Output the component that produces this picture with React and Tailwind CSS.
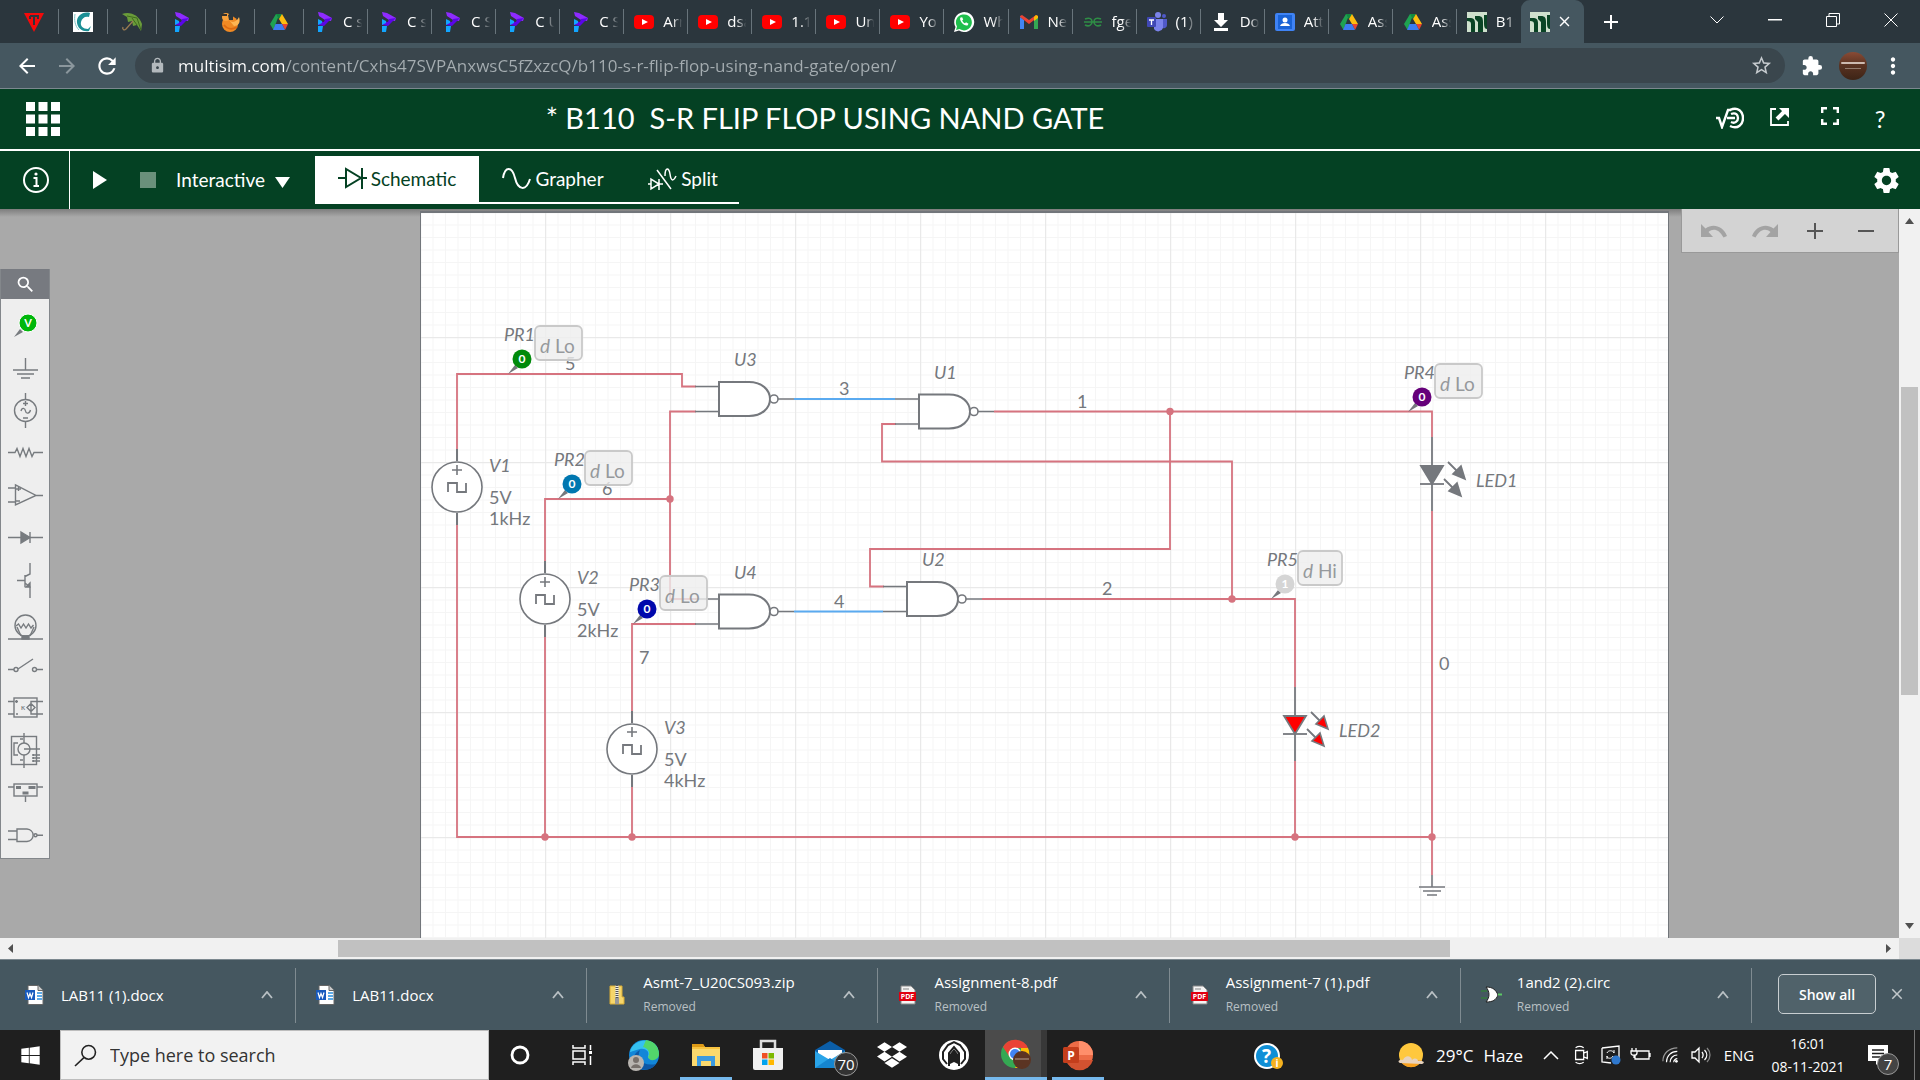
import React from "react";
import {
  MdArrowBack, MdArrowForward, MdRefresh, MdLock, MdStarBorder, MdExtension, MdMoreVert,
  MdSettings, MdSearch, MdClose, MdAdd,
} from "react-icons/md";
import { FaDropbox, FaWindows } from "react-icons/fa";

/* ---------- favicons ---------- */

const Svg = ({ s = 20, vb = "0 0 20 20", children, ...p }) => (
  <svg width={s} height={s} viewBox={vb} fill="none" className="shrink-0 overflow-visible" aria-hidden="true" {...p}>
    {children}
  </svg>
);

const TIcon = () => (
  <Svg>
    <path d="M0 1h20L10 20z" fill="#f40a0a" />
    <path d="M6 4h8v3M6 4v3M10 4v9" stroke="#2b363d" strokeWidth="2" />
  </Svg>
);
const CIcon = () => (
  <Svg>
    <rect width="20" height="20" fill="#fff" />
    <path d="M17 1C10-1 3 4 4 11c1 6 6 9 12 8l2-5-3 3c-5 0-8-3-7-7s4-6 8-5z" fill="#1b8f95" />
    <path d="M2 2c-1 6 0 12 4 16" stroke="#7fc4c6" />
  </Svg>
);
const Umbrella = () => (
  <Svg>
    <path d="M0 2C8-1 17 3 20 12l-1 7-4-6-4 1-1-5-4 1-1-5z" fill="#6a9c3a" />
    <path d="M10 6l5 7M5 4l10 2 4 12" stroke="#3f6b1e" />
    <path d="M11 9L4 17c-2 2-4 0-3-2" stroke="#9a7b52" strokeWidth="1.3" />
  </Svg>
);
const PIcon = () => (
  <Svg>
    <path d="M4 0l5 1 9 5-1 3-6-1-6-4z" fill="#8e2bff" />
    <path d="M18 6l-8 8-6-1 1-4 5 1 1-3z" fill="#5b05e8" />
    <path d="M4 7l4 2v2l-4 2zM4 14h5l-1 6H4z" fill="#12a5ff" />
  </Svg>
);
const Bird = () => (
  <Svg>
    <circle cx="10" cy="12" r="8" fill="#f08a24" />
    <circle cx="6" cy="5" r="4" fill="#f7a13c" />
    <path d="M8 3l5-3v8H9z" fill="#2b363d" />
    <path d="M9 8c4 4 8 1 10-3 2 6-1 9-5 9z" fill="#ffb552" />
    <path d="M1 2h6v2H1z" fill="#33302c" />
    <path d="M4 13c3 4 8 5 13 2" stroke="#dd6a12" strokeWidth="2" />
  </Svg>
);
const Drive = () => (
  <Svg>
    <path d="M7 2h3.300L4.500 18 1 12z" fill="#1fa251" />
    <path d="M7 2h6L10 7.500z" fill="#138a3f" />
    <path d="M13 2l6 10h-6L10 7z" fill="#fdbd0e" />
    <path d="M13 12h6l-3 6z" fill="#e8432f" />
    <path d="M6.500 12H13l3 6H4z" fill="#3d7df0" />
  </Svg>
);
const YouTube = () => (
  <Svg>
    <rect y="3" width="20" height="14" rx="4" fill="#f00" />
    <path d="M8 7l6 3-6 3z" fill="#fff" />
  </Svg>
);
const WhatsApp = () => (
  <Svg>
    <path d="M0 20l1.500-5A10 10 0 1 1 5 18.600z" fill="#fff" />
    <path d="M2 18l1-3.500a8 8 0 1 1 2.500 2.600z" fill="#1fbf4c" />
    <path d="M6.500 5.500c-2 2.500 3.500 9 7 8l1-1.800-2.500-1.500-1 1c-1-.3-2.500-1.800-2.800-2.800l1-1-1-2.200z" fill="#fff" />
  </Svg>
);
const Gmail = () => (
  <Svg>
    <path d="M1 17V5l4 3v9z" fill="#4285f4" />
    <path d="M15 17V8l4-3v12z" fill="#34a853" />
    <path d="M1 5V4l2-1 7 5 7-5 2 1v1l-9 7z" fill="#ea4335" />
    <path d="M15 5l2-2 2 1v2l-4 3z" fill="#fbbc04" />
  </Svg>
);
const Gfg = () => (
  <Svg>
    <path d="M1 10h18M2 7c5-2 7 0 7 3s-3 5-7 3M18 7c-5-2-7 0-7 3s3 5 7 3" stroke="#2f8d46" strokeWidth="1.600" />
  </Svg>
);
const Teams = () => (
  <Svg>
    <circle cx="11" cy="3" r="3" fill="#7b83eb" />
    <circle cx="17" cy="4" r="2" fill="#5059c9" />
    <path d="M7 7h9v9a5 5 0 0 1-9 1z" fill="#7b83eb" />
    <path d="M16 7h4v6a3 3 0 0 1-4 3z" fill="#5059c9" />
    <rect y="5" width="9" height="10" rx="1" fill="#4048b5" />
    <path d="M2 8h5M4.500 8v5" stroke="#fff" strokeWidth="1.300" />
  </Svg>
);
const Classroom = () => (
  <Svg>
    <rect y="1" width="20" height="18" rx="2" fill="#3f83f5" />
    <rect x="3" y="3" width="14" height="14" fill="#1a63d6" />
    <circle cx="10" cy="8" r="2.500" fill="#fff" />
    <path d="M5 14c1-4 9-4 10 0z" fill="#fff" />
  </Svg>
);
const NiIcon = () => (
  <Svg>
    <rect width="20" height="20" fill="#cfe0cd" />
    <path d="M0 6h3c3 0 5 1 5 5v9H4v-8c0-2-1-3-4-3z" fill="#0a4425" />
    <path d="M8 4h3c4 0 5 2 5 6v10h-5V10L8 7z" fill="#0a4425" />
    <path d="M17 3h3v14c-2 0-3-2-3-5z" fill="#0a4425" />
  </Svg>
);
const DownIcon = () => <Svg><path d="M7 1h6v7h4l-7 7-7-7h4zM3 16h14v3H3z" fill="#fff" /></Svg>;

const iconTabs = [TIcon, CIcon, Umbrella, PIcon, Bird, Drive];
const textTabs = [
  [PIcon, "C s"], [PIcon, "C s"], [PIcon, "C S"], [PIcon, "C U"], [PIcon, "C S"],
  [YouTube, "Arr"], [YouTube, "dsa"], [YouTube, "1.1"], [YouTube, "Unt"], [YouTube, "You"],
  [WhatsApp, "Wh"], [Gmail, "New"], [Gfg, "fge"], [Teams, "(1)"], [DownIcon, "Doc"],
  [Classroom, "Att"], [Drive, "Ass"], [Drive, "Ass"], [NiIcon, "B11"],
];

function TabStrip() {
  return (
    <div className="flex h-[43px] shrink-0 bg-[#2b363d] text-[15px] text-white">
      <div className="flex w-[82.5%] items-stretch pl-[10px]" role="tablist">
        {iconTabs.map((Icon, i) => (
          <button key={i} role="tab" aria-label="Pinned tab" className="flex w-[49px] shrink-0 items-center">
            <span className="flex flex-1 justify-center"><Icon /></span>
            <span className="h-[25px] w-px bg-[#68747b]" />
          </button>
        ))}
        {textTabs.map(([Icon, label], i) => (
          <button key={i} role="tab" className="flex min-w-0 flex-1 items-center pl-[10px]">
            <Icon />
            <span className="ml-[9px] flex-1 overflow-hidden whitespace-nowrap text-left [mask-image:linear-gradient(90deg,#000_40%,transparent_80%)]">
              {label}
            </span>
            {i < textTabs.length - 1 && <span className="h-[25px] w-px bg-[#68747b]" />}
          </button>
        ))}
        <button role="tab" aria-selected="true" aria-label="Multisim" className="flex min-w-0 flex-1 items-center gap-[6px] rounded-t-[9px] bg-[#455760] pl-[9px]">
          <NiIcon />
          <MdClose size={17} />
        </button>
      </div>
      <button aria-label="New tab" className="flex w-[54px] items-center justify-center"><MdAdd size={24} /></button>
      <div className="flex-1" />
      <button aria-label="Tab search" className="flex w-[58px] items-center justify-center pb-1">
        <svg width="14" height="8" viewBox="0 0 14 8" fill="none" stroke="#fff"><path d="M.5.5L7 7 13.500.5" /></svg>
      </button>
      <button aria-label="Minimize" className="flex w-[58px] items-center justify-center pb-1">
        <svg width="14" height="2" viewBox="0 0 14 2"><path d="M0 0h14v1.500H0z" fill="#fff" /></svg>
      </button>
      <button aria-label="Restore" className="flex w-[58px] items-center justify-center pb-1">
        <svg width="14" height="14" viewBox="0 0 14 14" fill="none" stroke="#fff"><path d="M.5 3.500h10v10H.5zM3 3V.5h10.500V11H11" /></svg>
      </button>
      <button aria-label="Close" className="flex w-[58px] items-center justify-center pb-1">
        <svg width="14" height="14" viewBox="0 0 14 14" fill="none" stroke="#fff"><path d="M.5.5l13 13M13.500.5l-13 13" /></svg>
      </button>
    </div>
  );
}

function AddressBar() {
  return (
    <div className="flex h-[46px] shrink-0 items-center border-b border-[#7c888f] bg-[#455760] text-white">
      <button aria-label="Back" className="ml-[7px] flex w-[40px] justify-center"><MdArrowBack size={24} /></button>
      <button aria-label="Forward" className="flex w-[40px] justify-center text-[#8b979d]"><MdArrowForward size={24} /></button>
      <button aria-label="Reload" className="flex w-[40px] justify-center"><MdRefresh size={26} /></button>
      <div className="ml-[8px] flex h-[35px] flex-1 items-center rounded-full bg-[#3a464d] pl-[14px] pr-[12px]">
        <MdLock size={17} className="text-[#b3b9bd]" />
        <input
          aria-label="Address"
          defaultValue="multisim.com/content/Cxhs47SVPAnxwsC5fZxzcQ/b110-s-r-flip-flop-using-nand-gate/open/"
          className="ml-[12px] min-w-0 flex-1 bg-[linear-gradient(90deg,#fff_107px,#a5adb1_107px)] bg-clip-text text-[17px] text-transparent outline-none"
        />
        <MdStarBorder size={23} className="text-[#c5cace]" />
      </div>
      <button aria-label="Extensions" className="ml-[15px] flex w-6 justify-center"><MdExtension size={22} /></button>
      <button aria-label="Profile" className="ml-[15px] flex size-[28px] flex-col items-center justify-center gap-1 rounded-full bg-[linear-gradient(#8a4b35,#5a3322_45%,#3d2416)]">
        <span className="h-[2px] w-[24px] rounded bg-[#cdbab0]" />
        <span className="h-px w-[16px] bg-[#937a6c]" />
      </button>
      <button aria-label="Menu" className="ml-[13px] mr-[14px] flex w-[26px] justify-center"><MdMoreVert size={26} /></button>
    </div>
  );
}

/* ---------- Multisim header ---------- */

function AppHeader() {
  return (
    <header className="grid h-[62px] shrink-0 grid-cols-[1fr_auto_1fr] items-center border-b-2 border-white bg-[#044123] text-white">
      <button aria-label="Apps" className="ml-[26px] w-[34px]">
        <svg width="34" height="34" viewBox="0 0 34 34" fill="#fff">
          {[0, 1, 2].map((r) => [0, 1, 2].map((c) => (
            <rect key={`${r}${c}`} x={c * 12.500} y={r * 12.500} width="9" height="9" />
          )))}
        </svg>
      </button>
      <h1 className="whitespace-pre pb-[2px] pr-[270px] text-[29px] leading-[36px]">* B110  S-R FLIP FLOP USING NAND GATE</h1>
      <div className="flex justify-end pr-[15px]">
        <button aria-label="Equations" className="flex w-[50px] justify-center">
          <svg width="28" height="22" viewBox="0 0 28 22" fill="none" stroke="#fff" strokeWidth="2.400">
            <path d="M0 11h3l3 9L12 3h3" />
            <path d="M14 3c8-4 13 2 13 8s-5 12-13 8" />
            <path d="M11 11h8M15 7c5-2 7 1 7 4s-3 6-7 4" />
          </svg>
        </button>
        <button aria-label="Share" className="flex w-[50px] justify-center">
          <svg width="20" height="20" viewBox="0 0 20 20" fill="none" stroke="#fff">
            <path d="M6 2H1v16h17v-4" strokeWidth="1.800" />
            <path d="M7 12l8-8" strokeWidth="4" />
            <path d="M9 1h10v10z" fill="#fff" stroke="none" />
          </svg>
        </button>
        <button aria-label="Full screen" className="flex w-[50px] justify-center">
          <svg width="18" height="18" viewBox="0 0 18 18" fill="none" stroke="#fff" strokeWidth="2.400">
            <path d="M1.200 6V1.200H6M12 1.200h4.800V6M16.800 12v4.800H12M6 16.800H1.200V12" />
          </svg>
        </button>
        <button aria-label="Help" className="flex w-[50px] justify-center text-[24px] leading-none">?</button>
      </div>
    </header>
  );
}

function SimBar() {
  return (
    <div className="flex h-[58px] shrink-0 items-stretch bg-[#044123] text-[19px] text-white">
      <button aria-label="Info" className="flex w-[70px] items-center justify-center border-r border-white pl-[3px]">
        <svg width="26" height="26" viewBox="0 0 26 26" fill="none" stroke="#fff">
          <circle cx="13" cy="13" r="12" strokeWidth="2" />
          <path d="M10.500 11H13.500v8M10.500 19h5.500" strokeWidth="2" />
          <circle cx="13" cy="7" r="1.600" fill="#fff" stroke="none" />
        </svg>
      </button>
      <button aria-label="Run" className="ml-[23px] flex items-center">
        <svg width="14" height="18" viewBox="0 0 14 18"><path d="M0 0l14 9-14 9z" fill="#fff" /></svg>
      </button>
      <button aria-label="Stop" className="ml-[33px] mr-[20px] flex items-center"><span className="size-4 bg-[#6a907b]" /></button>
      <label className="flex items-center gap-[10px] pt-px">
        <select aria-label="Simulation mode" className="appearance-none bg-transparent outline-none">
          <option>Interactive</option>
        </select>
        <svg width="15" height="11" viewBox="0 0 15 11" className="mt-1"><path d="M0 0h15L7.500 11z" fill="#fff" /></svg>
      </label>
      <nav className="ml-[25px] mt-[5px] flex h-[48px] border-b-2 border-white">
        <button className="flex w-[164px] items-center justify-center gap-1 bg-white text-[#044123]">
          <svg width="29" height="24" viewBox="0 0 29 24" fill="none" stroke="#044123" strokeWidth="2">
            <path d="M0 11h7M8 2v18l15-9zM24 1v21M24 11h5" />
          </svg>
          Schematic
        </button>
        <button className="flex w-[148px] items-center justify-center gap-1">
          <svg width="29" height="22" viewBox="0 0 29 22" fill="none" stroke="#fff" strokeWidth="2">
            <path d="M1 10C3-2 10-2 13 10s11 14 15 1" />
          </svg>
          Grapher
        </button>
        <button className="flex w-[112px] items-center justify-center gap-1">
          <svg width="29" height="24" viewBox="0 0 29 24" fill="none" stroke="#fff" strokeWidth="1.500">
            <path d="M0 17h3M3 12v10l8-5zM11 12v11M11 17h4M9 3l14 19M17 9c0-9 4-9 5-2s3 8 6 2" />
          </svg>
          Split
        </button>
      </nav>
      <div className="flex-1" />
      <button aria-label="Settings" className="mr-[18px] flex items-center"><MdSettings size={31} /></button>
    </div>
  );
}

/* ---------- component palette ---------- */

const paletteIcons = [
  ["Probes", <>
    <path d="M13 38l6-8 3 3z" fill="#777b7f" stroke="none" />
    <circle cx="27" cy="24" r="9" fill="#00b70b" stroke="#fff" strokeWidth="1" />
    <text x="27" y="28" textAnchor="middle" fontSize="11" fontWeight="700" fill="#fff" stroke="none">V</text>
  </>],
  ["Ground", <path d="M24.500 16v12M12 28h25M16 32h17M20 36h9" />],
  ["Sources", <>
    <circle cx="24.500" cy="25.500" r="11" />
    <path d="M24.500 8v6M24.500 37v6M24.500 16v5M22 18.500h5M22 33h5M20 26c1-4 4-3 4.500 0s4 3 5-1" />
  </>],
  ["Passive", <path d="M7 24.500h7l2-4 3 8 3-8 3 8 3-8 3 8 2-4h9" />],
  ["Analog", <path d="M14.500 14v20L35 24.500zM35 24.500h7M7 17h7M7 31h7M15 18h5M17.500 16v4M15 30h4" />],
  ["Diodes", <><path d="M7 23.500h35M29 18v11" /><path d="M20 18l9 5.500-9 5.500z" fill="#777b7f" /></>],
  ["Transistors", <><path d="M29 6v11l-5 2.500M24 18v12M16 23.500h8M24 26l5 4v11" /><path d="M25 30h4v-4z" fill="#777b7f" /></>],
  ["Indicators", <>
    <circle cx="24.500" cy="25.500" r="10.500" />
    <path d="M7 39h35M16 27l4 9M33 27l-4 9M15 26l2.500-2 2.500 4 2.500-4 2.500 4 2.500-4 2.500 4 2.500-3" />
    <path d="M21 36h7v3h-7z" fill="#777b7f" />
  </>],
  ["Switches", <><circle cx="15" cy="26.500" r="2" /><circle cx="33.500" cy="26.500" r="2" /><path d="M7 26.500h6M36 26.500h6M17 26l15-10" /></>],
  ["Modeling blocks", <>
    <rect x="13" y="12" width="23" height="19" />
    <path d="M7 15.500h6M7 28h6M42 15.500H30V28h12M26 21.500l4-4 4 4-4 4zM14 15.500h3M15.500 14v3M15 28h2" />
    <text x="20" y="24" fontSize="6" fontWeight="700" fill="#777b7f" stroke="none">K</text>
  </>],
  ["Electromechanical", <>
    <rect x="10.500" y="7.500" width="25" height="28" />
    <circle cx="23" cy="20" r="6" />
    <path d="M23 4v10M23 26v13M23 20h16M17 14h-4v12h4M34 26h5M34 29h5M34 32h5M19 10h3M19 31h3" />
    <path d="M32.500 25v8" strokeWidth="2.500" strokeDasharray="2 1" />
  </>],
  ["Power", <>
    <rect x="13" y="12" width="23" height="12" />
    <path d="M7 15h6M36 15h6M24.500 24v6" />
    <path d="M15 15.500h5M27.500 15.500h7M21.500 21h6" strokeWidth="3" />
  </>],
  ["Digital", <><path d="M7 16h9M7 24.500h9M16 14h10a7 6.300 0 0 1 0 12.500H16zM36 20.300h6" /><circle cx="34.500" cy="20.300" r="1.500" /></>],
];

function Palette() {
  return (
    <div className="w-[50px] border border-t-0 border-[#83878b] bg-[#eee]">
      <button aria-label="Search components" className="flex h-[30px] w-full items-center justify-center bg-[#777a80] text-white"><MdSearch size={21} /></button>
      {paletteIcons.map(([name, art]) => (
        <button key={name} aria-label={name} className="block h-[43px] w-full">
          <svg width="48" height="43" viewBox="0 0 48 43" fill="none" stroke="#777b7f" strokeWidth="1.400" className="overflow-visible">{art}</svg>
        </button>
      ))}
    </div>
  );
}

/* ---------- schematic ---------- */

const GRAY = "#75787d";

const Source = ({ x, y, name, freq }) => (
  <g>
    <g stroke={GRAY} strokeWidth="2" fill="none">
      <path d={`M${x} ${y - 38}v12M${x} ${y + 26}v12`} />
      <circle cx={x} cy={y} r="25" fill="#fff" strokeWidth="1.600" />
      <path d={`M${x - 5} ${y - 17}h10M${x} ${y - 22}v10`} strokeWidth="1.600" />
      <path d={`M${x - 9} ${y + 5}v-9h9v9h9v-9`} strokeWidth="1.800" />
    </g>
    <text x={x + 32} y={y - 15} className="italic">{name}</text>
    <text x={x + 32} y={y + 17}>5V</text>
    <text x={x + 32} y={y + 38}>{freq}</text>
  </g>
);

const Gate = ({ x, y, name }) => (
  <g>
    <g stroke={GRAY} strokeWidth="2" fill="none">
      <path d={`M${x - 24} ${y - 12.500}h24M${x - 24} ${y + 12.500}h24M${x + 59} ${y}h16`} strokeWidth="1.600" />
      <path d={`M${x} ${y - 17}h30c13 0 21 8 21 17s-8 17-21 17h-30z`} fill="#fff" />
      <circle cx={x + 55} cy={y} r="4" fill="#fff" strokeWidth="1.600" />
    </g>
    <text x={x + 15} y={y - 33} className="italic">{name}</text>
  </g>
);

const Led = ({ x, y, name, fill }) => (
  <g>
    <g stroke={GRAY} strokeWidth="1.800" fill={fill}>
      <path d={`M${x} ${y - 38}v74`} />
      <path d={`M${x - 11} ${y - 9}h22l-11 18z`} />
      <path d={`M${x - 12} ${y + 9}h24`} />
      <path d={`M${x + 16} ${y - 13}l12 12M${x + 12} ${y + 4}l12 12`} />
      <path d={`M${x + 33} ${y + 4}l-12-5 8-8zM${x + 29} ${y + 21}l-12-5 8-8z`} strokeWidth="1.600" />
    </g>
    <text x={x + 44} y={y + 12} className="italic">{name}</text>
  </g>
);

const Probe = ({ x, y, name, color, value = "0", reading = "Lo", w = 47 }) => (
  <g>
    <path d={`M${x - 14} ${y + 15}l7-9 3 3z`} fill={GRAY} />
    <circle cx={x} cy={y} r="9.500" fill={color} />
    <text x={x} y={y + 4} textAnchor="middle" fill="#fff" fontSize="12" className="[font-weight:700]">{value}</text>
    <text x={x - 18} y={y - 18} className="italic">{name}</text>
    <rect x={x + 13} y={y - 33} width={w} height="34" rx="5" fill="#eee" fillOpacity=".8" stroke="#c9c9c9" strokeWidth="1.800" />
    <text x={x + 18} y={y - 6} fontSize="19" fill="#96999c"><tspan className="italic">d</tspan> {reading}</text>
  </g>
);

function Schematic() {
  return (
    <svg width="1247" height="725" viewBox="421 213 1247 725" className="block font-['Lato',sans-serif]" fontSize="18" fill={GRAY} role="img" aria-label="S-R flip flop schematic">
      <defs>
        <pattern id="minor" x="420" y="212" width="12.500" height="12.500" patternUnits="userSpaceOnUse">
          <path d="M.5 0v12.500M0 .5h12.500" stroke="#f5f5f5" fill="none" />
        </pattern>
        <pattern id="major" x="420" y="212" width="125" height="125" patternUnits="userSpaceOnUse">
          <path d="M.5 0v125M0 .5h125" stroke="#e9e9e9" fill="none" strokeWidth="1.500" />
        </pattern>
      </defs>
      <rect x="421" y="213" width="1247" height="725" fill="url(#minor)" />
      <rect x="421" y="213" width="1247" height="725" fill="url(#major)" />

      <g stroke="#d6737f" strokeWidth="1.800" fill="none">
        <path d="M457 449V374h225v12.500h14" />
        <path d="M457 524v313h975" />
        <path d="M545 562v-63h125M696 411.500h-26V599h26" />
        <path d="M545 637v200M632 787v50M632 711v-87h64" />
        <path d="M896 424h-14v37.500h350V599" />
        <path d="M884 586.500h-14V549h300V411.500" />
        <path d="M994 411.500h438V437M1432 511v364" />
        <path d="M982 599h313v88M1295 761v76" />
      </g>
      <path d="M794 399h101M794 611.500h89" stroke="#5aaaf0" strokeWidth="1.800" />
      <g fill="#d6737f">
        {[[670, 499], [1170, 411.500], [1232, 599], [545, 837], [632, 837], [1295, 837], [1432, 837]].map(([x, y]) => (
          <circle key={`${x}-${y}`} cx={x} cy={y} r="3.700" />
        ))}
      </g>

      <path d="M1432 875v12M1419 887h26M1423 891h18M1427 895h10" stroke={GRAY} strokeWidth="1.600" />

      <Source x={457} y={487} name="V1" freq="1kHz" />
      <Source x={545} y={599} name="V2" freq="2kHz" />
      <Source x={632} y={749} name="V3" freq="4kHz" />
      <Gate x={719} y={399} name="U3" />
      <Gate x={919} y={411.500} name="U1" />
      <Gate x={719} y={611.500} name="U4" />
      <Gate x={907} y={599} name="U2" />
      <Led x={1432} y={475} name="LED1" fill={GRAY} />
      <Led x={1295} y={725} name="LED2" fill="#f00" />

      <text x="565" y="370">5</text>
      <text x="602" y="495">6</text>
      <text x="839" y="395">3</text>
      <text x="834" y="608">4</text>
      <text x="1077" y="408">1</text>
      <text x="1102" y="595">2</text>
      <text x="639" y="664">7</text>
      <text x="1439" y="670">0</text>

      <Probe x={522} y={359} name="PR1" color="#008a0b" />
      <Probe x={572} y={484} name="PR2" color="#0077b0" />
      <Probe x={647} y={609} name="PR3" color="#0008ac" />
      <Probe x={1422} y={397} name="PR4" color="#66007a" />
      <Probe x={1285} y={584} name="PR5" color="#d5d5d5" value="1" reading="Hi" w={44} />
    </svg>
  );
}

function Workspace() {
  return (
    <div className="flex min-h-0 flex-1 flex-col">
      <div className="flex min-h-0 flex-1">
        <main className="flex min-w-0 flex-1 overflow-hidden bg-[#a9a9a9] bg-[linear-gradient(#7d7d7d,#a9a9a9_8px)]">
          <div className="flex-[420] pt-[60px]"><Palette /></div>
          <div className="mt-[2px] shrink-0 self-stretch overflow-hidden border-x border-t-2 border-[#72767b] bg-white"><Schematic /></div>
          <div className="flex flex-[230] items-start justify-end">
            <div className="flex h-[44px] w-[218px] items-center justify-around border border-t-0 border-[#999] bg-[#d3d3d3] px-[7px]">
              <button aria-label="Undo" className="flex w-[50px] justify-center">
                <svg width="26" height="14" viewBox="0 0 26 14"><path d="M0 0l4.500 4.500C12-1 22 2 26 12l-3.500 1.500C18 5 12 4 7.500 8L12 13H0z" fill="#a3a3a3" /></svg>
              </button>
              <button aria-label="Redo" className="flex w-[50px] justify-center">
                <svg width="26" height="14" viewBox="0 0 26 14"><path d="M26 0l-4.500 4.500C14-1 4 2 0 12l3.500 1.500C8 5 14 4 18.500 8L14 13h12z" fill="#a3a3a3" /></svg>
              </button>
              <button aria-label="Zoom in" className="flex w-[50px] justify-center">
                <svg width="16" height="16" viewBox="0 0 16 16"><path d="M8 0v16M0 8h16" stroke="#555" strokeWidth="2" /></svg>
              </button>
              <button aria-label="Zoom out" className="flex w-[50px] justify-center">
                <svg width="16" height="16" viewBox="0 0 16 16"><path d="M0 8h16" stroke="#555" strokeWidth="2" /></svg>
              </button>
            </div>
          </div>
        </main>
        <div className="flex w-[21px] flex-col items-center bg-[#f1f1f1] py-[9px]">
          <svg width="9" height="6" viewBox="0 0 9 6"><path d="M0 6l4.500-6L9 6z" fill="#505050" /></svg>
          <div className="flex-[163]" />
          <div className="w-[17px] flex-[308] bg-[#c1c1c1]" />
          <div className="flex-[228]" />
          <svg width="9" height="6" viewBox="0 0 9 6"><path d="M0 0l4.500 6L9 0z" fill="#505050" /></svg>
        </div>
      </div>
      <div className="flex h-[21px] shrink-0 bg-[#f1f1f1]">
        <div className="flex flex-1 items-center px-[8px]">
          <svg width="5" height="9" viewBox="0 0 5 9"><path d="M5 0v9L0 4.500z" fill="#505050" /></svg>
          <div className="flex-[325]" />
          <div className="h-[17px] flex-[1112] bg-[#c1c1c1]" />
          <div className="flex-[436]" />
          <svg width="5" height="9" viewBox="0 0 5 9"><path d="M0 0v9l5-4.500z" fill="#505050" /></svg>
        </div>
        <div className="w-[21px] bg-[#dcdcdc]" />
      </div>
    </div>
  );
}

/* ---------- downloads ---------- */

const Word = () => (
  <Svg>
    <path d="M3 .5h10l5 5v14H3z" fill="#fff" stroke="#666" />
    <path d="M13 .5v5h5" stroke="#666" fill="#ccc" />
    <path d="M12 8h5M12 11h5M12 14h5" stroke="#2a8fe0" strokeWidth="1.300" />
    <rect x="0" y="5" width="10" height="10" fill="#185abd" />
    <path d="M2 7.500l1.500 5L5 8.500l1.500 4 1.500-5" stroke="#fff" strokeWidth="1.200" />
  </Svg>
);
const Zip = () => (
  <Svg>
    <path d="M3 1h12v11h2v7H3z" fill="#f6d66b" stroke="#d9ac35" />
    <path d="M10 0v15" stroke="#eee" strokeWidth="3" />
    <path d="M10 0v15" stroke="#555" strokeWidth="3" strokeDasharray="1 1" />
    <rect x="8" y="13" width="4" height="6" fill="#999" />
  </Svg>
);
const Pdf = () => (
  <Svg>
    <path d="M3 1h10l4 4v14H3z" fill="#f4f4f4" stroke="#888" />
    <path d="M5 4h6" stroke="#888" />
    <rect x="1" y="7" width="17" height="9" fill="#e00010" />
    <text x="9.500" y="14.200" textAnchor="middle" fontSize="7" fontWeight="700" fill="#fff">PDF</text>
  </Svg>
);
const Circ = () => (
  <Svg>
    <path d="M0 6h6M0 13h6" stroke="#357b3c" strokeWidth="1.500" />
    <path d="M5 2c7 0 10 3 12 8-2 5-5 7-12 7 4-5 4-10 0-15z" fill="#fff" stroke="#222" />
    <path d="M17 9.500h4" stroke="#5cc965" strokeWidth="2" />
  </Svg>
);

const downloads = [
  [Word, "LAB11 (1).docx", false], [Word, "LAB11.docx", false], [Zip, "Asmt-7_U20CS093.zip", true],
  [Pdf, "Assignment-8.pdf", true], [Pdf, "Assignment-7 (1).pdf", true], [Circ, "1and2 (2).circ", true],
];

function Downloads() {
  return (
    <div className="flex h-[71px] shrink-0 items-center border-t border-[#7c888f] bg-[#455760] pl-[5px] text-white">
      <div className="grid min-w-0 flex-1 grid-cols-6">
        {downloads.map(([Icon, name, removed]) => (
          <div key={name} className="flex h-[55px] min-w-0 items-center border-r border-[#7f8b91] pl-[20px] pr-[22px]">
            <Icon />
            <div className="ml-[16px] min-w-0 flex-1">
              <a href="#" className={removed ? "block whitespace-nowrap text-[15px] leading-[24px]" : "block whitespace-nowrap text-[15px] leading-[20px]"}>{name}</a>
              {removed && <div className="text-[12px] leading-[26px] text-[#b9c0c4]">Removed</div>}
            </div>
            <button aria-label={`Options for ${name}`}>
              <svg width="12" height="8" viewBox="0 0 12 8" fill="none" stroke="#b9c0c4" strokeWidth="1.800"><path d="M1 7l5-6 5 6" /></svg>
            </button>
          </div>
        ))}
      </div>
      <button className="mb-[2px] ml-[26px] h-[40px] w-[98px] rounded-[5px] border border-[#c8ced1] bg-[#50626a] text-[14px] font-semibold">Show all</button>
      <button aria-label="Close downloads" className="mb-[2px] ml-[11px] mr-[13px] flex w-[20px] justify-center text-[#c2c8cb]"><MdClose size={18} /></button>
    </div>
  );
}

/* ---------- taskbar ---------- */

const apps = [
  ["Cortana", <Svg s={20}><circle cx="10" cy="10" r="8" stroke="#fff" strokeWidth="2.800" /></Svg>],
  ["Task view", <Svg s={20}><path d="M1 0v3h12V0M1 20v-3h12v3M1 6h12v8H1zM18.500 0v5M18.500 11v9" stroke="#fff" strokeWidth="1.500" /><rect x="17" y="6" width="3" height="3" fill="#fff" /></Svg>],
  ["Edge", <Svg s={30} vb="0 0 30 30">
    <circle cx="15" cy="15" r="15" fill="#1286d8" />
    <path d="M1 12C3 3 12-1 20 1s11 9 9 15c-2 5-11 4-10 0 2-5-3-8-8-7S2 12 1 12z" fill="#35c1f1" />
    <path d="M17 0c9 1 13 8 13 14 0 7-10 8-11 3 3-4 0-9-5-10z" fill="#52d66b" />
    <path d="M11 10c-4 8 2 17 16 14-4 6-13 8-19 3S4 13 11 10z" fill="#0d58a6" />
    <circle cx="7" cy="23" r="8" fill="#b9b5b0" /><circle cx="7" cy="20" r="3" fill="#77706b" /><path d="M2 28c1-5 9-5 10 0z" fill="#77706b" />
  </Svg>],
  ["File Explorer", <Svg s={28} vb="0 0 28 28">
    <path d="M0 3h11l2 3h15v19H0z" fill="#f9c440" /><path d="M0 8h28v17H0z" fill="#fbd96d" /><path d="M0 3h11l2 3H0z" fill="#dd9a16" />
    <path d="M5 15h18v10h-4v-5H9v5H5z" fill="#3c9be0" />
  </Svg>],
  ["Microsoft Store", <Svg s={30} vb="0 0 30 30">
    <path d="M8 10V1h14v9" stroke="#ddd" strokeWidth="2.500" /><path d="M0 8h30v20a2 2 0 0 1-2 2H2a2 2 0 0 1-2-2z" fill="#f0f0f0" />
    <path d="M9 13h5.500v5.500H9z" fill="#f04e23" /><path d="M15.500 13H21v5.500h-5.500z" fill="#7eb900" /><path d="M9 19.500h5.500V25H9z" fill="#00a3ee" /><path d="M15.500 19.500H21V25h-5.500z" fill="#ffb800" />
  </Svg>],
  ["Mail", <><Svg s={30} vb="0 0 30 30">
    <path d="M0 10L15 1l15 9v18H0z" fill="#0b5ea8" /><path d="M3 10h24v9H3z" fill="#fff" /><path d="M0 11l15 9 15-9v17H0z" fill="#2aa4e8" /><path d="M0 28l15-10 15 10z" fill="#1585cf" />
  </Svg>
    <span className="absolute bottom-[4px] right-[3px] flex size-[24px] items-center justify-center rounded-full border border-[#999] bg-[#333] text-[15px] leading-none">70</span></>],
  ["Dropbox", <FaDropbox size={30} color="#fff" />],
  ["VPN", <Svg s={30} vb="0 0 30 30">
    <circle cx="15" cy="15" r="15" fill="#fff" />
    <path d="M8 24l-4-5V12l5-7 6-3 6 3 5 7v7l-4 5M10 26V13l5-6 5 6v13" stroke="#1f1f1f" strokeWidth="2" />
    <path d="M11 24V14l4-5 4 5v10l-4-2z" fill="#1f1f1f" />
  </Svg>],
  ["Chrome", <Svg s={30} vb="0 0 30 30">
    <circle cx="14" cy="14" r="14" fill="#35a853" /><path d="M2 7a14 14 0 0 1 25 1H14L8 16z" fill="#ea4335" /><path d="M27 8a14 14 0 0 1-13 20l6-11V8z" fill="#fbbc05" />
    <circle cx="14" cy="14" r="6.500" fill="#fff" /><circle cx="14" cy="14" r="5" fill="#4285f4" /><circle cx="21" cy="20" r="9" fill="#5b3423" /><path d="M14 19h14" stroke="#a58d80" strokeWidth="1.200" />
  </Svg>],
  ["PowerPoint", <Svg s={29} vb="0 0 29 29">
    <circle cx="15" cy="14" r="14" fill="#ed6c47" /><path d="M15 0a14 14 0 0 1 14 14H15z" fill="#ff8f6b" /><path d="M2 19h27a14 14 0 0 1-27 0z" fill="#d35230" />
    <rect x="-1" y="6" width="16" height="16" rx="1.500" fill="#c43e1c" /><text x="7" y="18.500" textAnchor="middle" fontSize="12" fontWeight="700" fill="#fff">P</text>
  </Svg>],
];

const trayIcons = [
  ["Show hidden icons", <svg width="16" height="9" viewBox="0 0 16 9" fill="none" stroke="#fff" strokeWidth="1.500"><path d="M1 8l7-7 7 7" /></svg>],
  ["Meet now", <Svg s={18}><path d="M4 5h9v10H4zM13 8l4-2v8l-4-2M4 2c3-2 6-2 9 0M4 18c3 2 6 2 9 0" stroke="#fff" strokeWidth="1.400" /></Svg>],
  ["Update", <Svg s={20}><path d="M1 3l17-2v12M1 3v14l9 1" stroke="#fff" strokeWidth="1.300" /><path d="M6 8c1-3 6-3 7 0V5M12 11c-1 3-6 3-6 0v3" stroke="#fff" /><circle cx="15" cy="15" r="4.500" fill="#2f78cd" /></Svg>],
  ["Battery", <Svg s={20}><path d="M6 6h12v8H4v-4M19 8v4M1 3v3M5 3v3M0 6h6v2c0 3-6 3-6 0zM3 10v3" stroke="#fff" strokeWidth="1.300" /></Svg>],
  ["Network", <Svg s={18}><path d="M1 17C1 8 8 2 17 2" stroke="#999" strokeWidth="1.300" /><path d="M5 18C5 11 10 6 17 6M9 18c0-4 3-8 8-8M13 18c0-2 2-4 4-4" stroke="#fff" strokeWidth="1.300" /><circle cx="16" cy="17" r="1.500" fill="#fff" /></Svg>],
  ["Volume", <Svg s={20}><path d="M1 7h3l4-4v14l-4-4H1zM11 7c1.500 2 1.500 4 0 6M13.500 5c3 3 3 7 0 10" stroke="#fff" strokeWidth="1.300" /><path d="M16 3c4 4 4 10 0 14" stroke="#888" strokeWidth="1.300" /></Svg>],
];

function Taskbar() {
  return (
    <footer className="flex h-[50px] shrink-0 items-stretch bg-[#1f1f1f] text-white">
      <button aria-label="Start" className="flex w-[60px] items-center justify-center"><FaWindows size={21} /></button>
      <label className="flex w-[429px] items-center border border-[#bdbdbd] bg-[#f2f2f2] pl-[14px]">
        <Svg s={21}><circle cx="13" cy="7" r="6.500" stroke="#222" strokeWidth="1.500" /><path d="M8.500 12L0 20" stroke="#222" strokeWidth="1.500" /></Svg>
        <input aria-label="Search" placeholder="Type here to search" className="ml-[14px] min-w-0 flex-1 bg-transparent text-[18px] text-black outline-none placeholder:text-[#333]" />
      </label>
      {apps.map(([name, art]) => (
        <button
          key={name}
          aria-label={name}
          className={
            name === "Chrome" ? "relative flex w-[62px] items-center justify-center border-b-[3px] border-[#76b9ed] bg-[linear-gradient(90deg,#4b4b4b_56px,#383838_56px)] pt-[3px]"
            : name === "File Explorer" || name === "PowerPoint" ? "relative mx-[5px] flex w-[52px] items-center justify-center border-b-[3px] border-[#76b9ed] pt-[3px]"
            : "relative flex w-[62px] items-center justify-center"
          }
        >
          {art}
        </button>
      ))}
      <div className="flex-1" />
      <button aria-label="Get help" className="mr-[97px] flex w-[48px] items-center justify-center">
        <Svg s={27} vb="0 0 27 27">
          <circle cx="13" cy="14" r="12" fill="#0f8fd6" stroke="#fff" strokeWidth="2" />
          <text x="12.500" y="21" textAnchor="middle" fontSize="19" fontWeight="700" fill="#fff">?</text>
          <circle cx="23" cy="21" r="6" fill="#f5b21f" /><text x="23" y="25" textAnchor="middle" fontSize="10" fontWeight="700" fill="#fff">i</text>
        </Svg>
      </button>
      <button className="flex w-[148px] items-center whitespace-nowrap pl-[10px] pt-[2px] text-[17px]">
        <Svg s={26} vb="0 0 26 26">
          <circle cx="13" cy="12" r="12" fill="#ffc83d" /><path d="M2 17a12 12 0 0 0 22 0z" fill="#f7a01e" />
          <path d="M2 20c-3-1-1-4 3-3 2-5 8-5 9 0 3-3 6-1 6 1 5-1 8 2 4 3z" fill="#e8d3bd" />
        </Svg>
        <span className="ml-[12px]">29°C</span><span className="ml-[10px]">Haze</span>
      </button>
      {trayIcons.map(([name, art]) => (
        <button key={name} aria-label={name} className="flex w-[30px] items-center justify-center">{art}</button>
      ))}
      <button className="w-[46px] text-center text-[15px]">ENG</button>
      <button className="flex w-[92px] flex-col items-center justify-center whitespace-nowrap text-[14px] leading-[23px]"><span>16:01</span><span>08-11-2021</span></button>
      <button aria-label="Notifications" className="relative flex w-[60px] items-center pl-[14px]">
        <Svg s={20}><path d="M0 0h20v16h-8l-4 4v-4H0z" fill="#fff" /><path d="M4 5h12M4 8.500h12M4 12h8" stroke="#1f1f1f" strokeWidth="1.500" /></Svg>
        <span className="absolute bottom-[5px] left-[23px] flex size-[22px] items-center justify-center rounded-full border border-[#999] bg-[#444] text-[15px] leading-none">7</span>
      </button>
      <div className="w-[6px] border-l border-[#777]" />
    </footer>
  );
}

export default function App() {
  return (
    <div className="flex h-screen flex-col overflow-hidden font-['Open_Sans',sans-serif]">
      <TabStrip />
      <AddressBar />
      <div className="flex min-h-0 flex-1 flex-col font-['Lato',sans-serif]">
        <AppHeader />
        <SimBar />
        <Workspace />
      </div>
      <Downloads />
      <Taskbar />
    </div>
  );
}
